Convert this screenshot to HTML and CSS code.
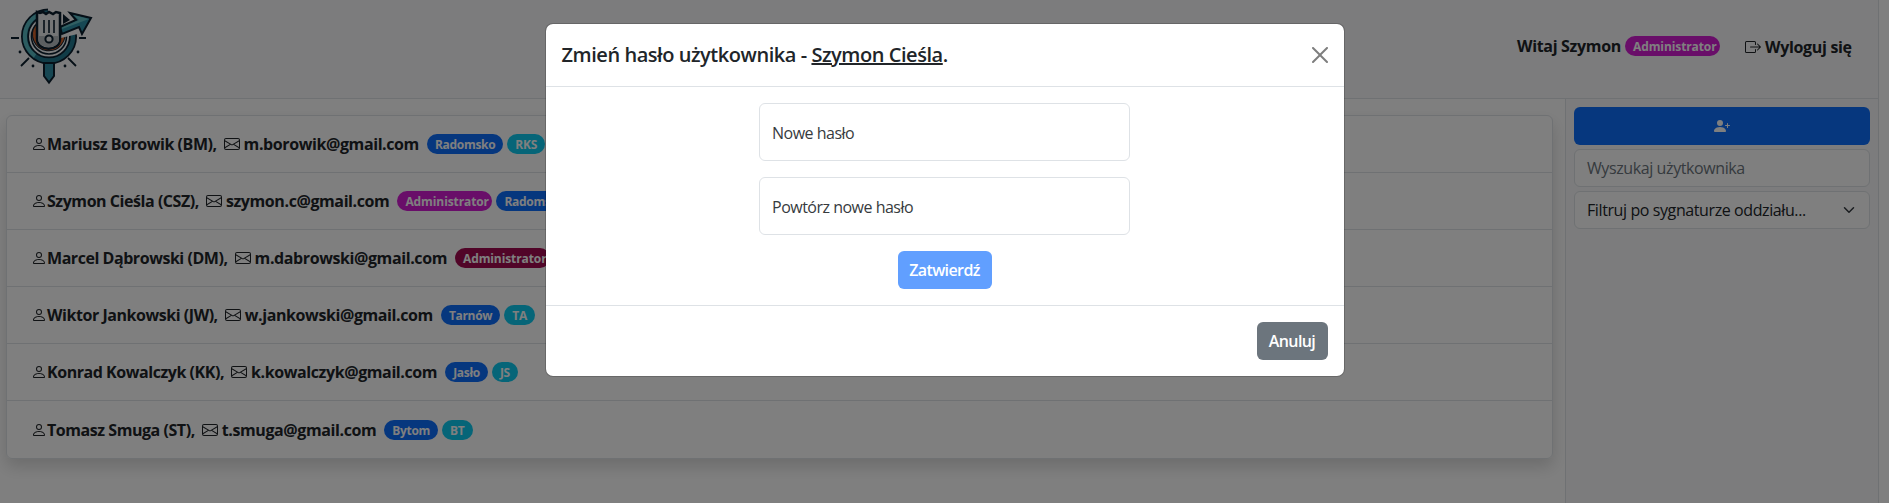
FILE: index.html
```html
<!DOCTYPE html>
<html lang="pl">
<head>
<meta charset="utf-8">
<title>Użytkownicy</title>
<link rel="stylesheet" href="styles.css">
</head>
<body>
<svg width="0" height="0" class="sprite">
  <symbol id="person" viewBox="0 0 16 16"><path d="M8 8a3 3 0 1 0 0-6 3 3 0 0 0 0 6Zm2-3a2 2 0 1 1-4 0 2 2 0 0 1 4 0Zm4 8c0 1-1 1-1 1H3s-1 0-1-1 1-4 6-4 6 3 6 4Zm-1-.004c-.001-.246-.154-.986-.832-1.664C11.516 10.680 10.289 10 8 10c-2.290 0-3.516.68-4.168 1.332-.678.678-.83 1.418-.832 1.664h10Z"/></symbol>
  <symbol id="envelope" viewBox="0 0 16 16"><path d="M0 4a2 2 0 0 1 2-2h12a2 2 0 0 1 2 2v8a2 2 0 0 1-2 2H2a2 2 0 0 1-2-2V4Zm2-1a1 1 0 0 0-1 1v.217l7 4.200 7-4.200V4a1 1 0 0 0-1-1H2Zm13 2.383-4.708 2.825L15 11.105V5.383Zm-.034 6.876-5.640-3.471L8 9.583l-1.326-.795-5.640 3.470A1 1 0 0 0 2 13h12a1 1 0 0 0 .966-.741ZM1 11.105l4.708-2.897L1 5.383v5.722Z"/></symbol>
</svg>
<div class="page">
  <header class="topbar">
    <svg class="logo" viewBox="0 0 90 84" width="90" height="84">
      <g fill="none">
        <circle cx="41" cy="31.500" r="24" stroke="#0b1e2e" stroke-width="8"/>
        <circle cx="41" cy="31.500" r="24" stroke="#23788f" stroke-width="4.500"/>
        <path d="M27 51A24 24 0 0 1 30 10" stroke="#58b9c0" stroke-width="4"/>
        <circle cx="41" cy="31.500" r="17.500" stroke="#0b1e2e" stroke-width="1.600"/>
        <path d="M29 22a14 14 0 1 0 25 3" stroke="#0b1e2e" stroke-width="5.500"/>
        <path d="M29 22a14 14 0 1 0 25 3" stroke="#d4622a" stroke-width="3.500"/>
      </g>
      <path d="M40 0H78V27L53 33V10H40Z" fill="#f8f9fa"/>
      <path d="M55 9l7 6-7 4Z" fill="#0b1e2e"/>
      <path d="M52 22L68 15 62 8 83 13 74 29 71 22 54 29Z" fill="#2f91a8" stroke="#0b1e2e" stroke-width="2"/>
      <path d="M65 10L81 14 54 24V22.500L71 15Z" fill="#63bfc5"/>
      <path d="M29 7l3 1 3-1 3 2 3-2 4 2 3-2 4 1v26c0 13-23 13-23 0Z" fill="#e9ebed" stroke="#0b1e2e" stroke-width="2.500"/>
      <path d="M30.500 31h20.500v5c-2 8-18 8-20.500 0Z" fill="#b9bec3"/>
      <path d="M36 15v13m5-13v13m5-13v13" stroke="#0b1e2e" stroke-width="1.600"/>
      <circle cx="41" cy="34" r="3.600" fill="#e9ebed" stroke="#0b1e2e" stroke-width="2"/>
      <path d="M36 58h10v13l-5 6.500-5-6.500Z" fill="#2f8fa6" stroke="#0b1e2e" stroke-width="2"/>
      <path d="M3 33h8m60 0h7M21 53l-8 8m47-8l8 8" stroke="#0b1e2e" stroke-width="1.800"/>
      <g fill="#0b1e2e"><circle cx="12" cy="47" r="1.400"/><circle cx="70" cy="47" r="1.400"/><circle cx="25" cy="61" r="1.400"/><circle cx="57" cy="61" r="1.400"/></g>
    </svg>
    <div class="account">
      <span class="hello">Witaj Szymon</span>
      <span class="badge magenta admin">Administrator</span>
      <a class="logout"><svg width="16" height="16" viewBox="0 0 16 16" fill="currentColor"><path fill-rule="evenodd" d="M10 12.500a.5.5 0 0 1-.5.5h-8a.5.5 0 0 1-.5-.5v-9a.5.5 0 0 1 .5-.5h8a.5.5 0 0 1 .5.5v2a.5.5 0 0 0 1 0v-2A1.500 1.500 0 0 0 9.500 2h-8A1.500 1.500 0 0 0 0 3.500v9A1.500 1.500 0 0 0 1.500 14h8a1.500 1.500 0 0 0 1.500-1.500v-2a.5.5 0 0 0-1 0v2z"/><path fill-rule="evenodd" d="M15.854 8.354a.5.5 0 0 0 0-.708l-3-3a.5.5 0 0 0-.708.708L14.293 7.500H5.500a.5.5 0 0 0 0 1h8.793l-2.147 2.146a.5.5 0 0 0 .708.708l3-3z"/></svg><span>Wyloguj się</span></a>
    </div>
  </header>
  <div class="content">
    <main class="main">
      <ul class="users">
        <li><svg class="ico"><use href="#person"/></svg><span class="name">Mariusz Borowik (BM),</span><svg class="ico mail"><use href="#envelope"/></svg><span class="email">m.borowik@gmail.com</span><span class="badge blue">Radomsko</span><span class="badge cyan">RKS</span></li>
        <li><svg class="ico"><use href="#person"/></svg><span class="name">Szymon Cieśla (CSZ),</span><svg class="ico mail"><use href="#envelope"/></svg><span class="email">szymon.c@gmail.com</span><span class="badge magenta admin">Administrator</span><span class="badge blue">Radomsko</span></li>
        <li><svg class="ico"><use href="#person"/></svg><span class="name">Marcel Dąbrowski (DM),</span><svg class="ico mail"><use href="#envelope"/></svg><span class="email">m.dabrowski@gmail.com</span><span class="badge crimson admin">Administrator</span></li>
        <li><svg class="ico"><use href="#person"/></svg><span class="name">Wiktor Jankowski (JW),</span><svg class="ico mail"><use href="#envelope"/></svg><span class="email">w.jankowski@gmail.com</span><span class="badge blue">Tarnów</span><span class="badge cyan">TA</span></li>
        <li><svg class="ico"><use href="#person"/></svg><span class="name">Konrad Kowalczyk (KK),</span><svg class="ico mail"><use href="#envelope"/></svg><span class="email">k.kowalczyk@gmail.com</span><span class="badge blue">Jasło</span><span class="badge cyan">JS</span></li>
        <li><svg class="ico"><use href="#person"/></svg><span class="name">Tomasz Smuga (ST),</span><svg class="ico mail"><use href="#envelope"/></svg><span class="email">t.smuga@gmail.com</span><span class="badge blue">Bytom</span><span class="badge cyan">BT</span></li>
      </ul>
    </main>
    <aside class="side">
      <button class="add"><svg width="16" height="16" viewBox="0 0 16 16" fill="currentColor"><path d="M1 14s-1 0-1-1 1-4 6-4 6 3 6 4-1 1-1 1H1zm5-6a3 3 0 1 0 0-6 3 3 0 0 0 0 6z"/><path fill-rule="evenodd" d="M13.500 5a.5.5 0 0 1 .5.5V7h1.500a.5.5 0 0 1 0 1H14v1.500a.5.5 0 0 1-1 0V8h-1.500a.5.5 0 0 1 0-1H13V5.500a.5.5 0 0 1 .5-.5z"/></svg></button>
      <div class="field search"><span>Wyszukaj użytkownika</span></div>
      <div class="field select"><span>Filtruj po sygnaturze oddziału...</span><svg width="16" height="12" viewBox="0 0 16 16"><path fill="none" stroke="#343a40" stroke-linecap="round" stroke-linejoin="round" stroke-width="2" d="m2 5 6 6 6-6"/></svg></div>
    </aside>
  </div>
</div>
<div class="overlay">
  <section class="modal">
    <div class="modal-head">
      <h5>Zmień hasło użytkownika - <u>Szymon Cieśla</u>.</h5>
      <svg class="close" width="16" height="16" viewBox="0 0 16 16"><path d="M.293.293a1 1 0 0 1 1.414 0L8 6.586 14.293.293a1 1 0 1 1 1.414 1.414L9.414 8l6.293 6.293a1 1 0 0 1-1.414 1.414L8 9.414l-6.293 6.293a1 1 0 0 1-1.414-1.414L6.586 8 .293 1.707a1 1 0 0 1 0-1.414z"/></svg>
    </div>
    <div class="modal-body">
      <div class="pass">Nowe hasło</div>
      <div class="pass">Powtórz nowe hasło</div>
      <button class="btn confirm">Zatwierdź</button>
    </div>
    <div class="modal-foot"><button class="btn cancel">Anuluj</button></div>
  </section>
</div>
</body>
</html>
```
FILE: styles.css
```css
* { box-sizing: border-box; }
body { margin: 0; height: 503px; overflow: hidden; font: 16px/24px "Open Sans", "Noto Sans", sans-serif; color: #212529; background: #fff; }
.sprite { position: absolute; }
button { font: inherit; border: 0; padding: 0; }
.page { width: 1879px; height: 503px; border-right: 1px solid #dee2e6; display: flex; flex-direction: column; }
.topbar { height: 99px; flex: none; background: #f8f9fa; border-bottom: 1px solid #dee2e6; display: flex; justify-content: space-between; align-items: flex-start; padding: 5px 25px 0 8px; }
.account { display: flex; align-items: flex-start; margin-top: 29px; font-weight: 700; letter-spacing: -0.320px; }
.hello { margin-right: 4px; width: 104px; white-space: nowrap; }
.account .badge { margin: 2px 25px 0 0; }
.logout { display: flex; align-items: center; gap: 4px; margin-top: 1px; width: 108px; white-space: nowrap; }
.content { flex: 1; display: flex; }
.main { flex: 1; padding: 16px 12px 0 6px; }
.users { margin: 0; padding: 0; list-style: none; border: 1px solid #dee2e6; border-radius: 6px; box-shadow: 0 8px 16px rgba(0,0,0,.15); }
.users li { height: 57px; display: flex; align-items: center; padding-left: 24px; border-bottom: 1px solid #dee2e6; font-weight: 700; white-space: nowrap; }
.users li:last-child { border-bottom: 0; }
.name { letter-spacing: -0.450px; }
.ico { width: 16px; height: 16px; fill: #212529; flex: none; }
.mail { margin: 0 4px 0 7px; }
.email { margin-right: 8px; letter-spacing: -0.400px; }
.badge { height: 20px; padding: 0 8px; margin-right: 4px; border-radius: 10px; color: #fff; font-size: 12px; line-height: 21px; font-weight: 700; letter-spacing: -0.300px; white-space: nowrap; text-align: center; }
.admin { width: 95px; letter-spacing: -0.100px; }
.blue { background: #0d6efd; }
.cyan { background: #0dcaf0; }
.magenta { background: #d31cd3; }
.crimson { background: #a30b50; }
.side { width: 313px; flex: none; background: #f8f9fa; border-left: 1px solid #dee2e6; padding: 8px; display: flex; flex-direction: column; gap: 4px; }
.add { height: 38px; border-radius: 6px; background: #0d6efd; color: #fff; display: flex; align-items: center; justify-content: center; }
.field { height: 38px; border: 1px solid #dee2e6; border-radius: 6px; background: #fff; padding: 0 12px; display: flex; align-items: center; justify-content: space-between; letter-spacing: -0.400px; white-space: nowrap; }
.search { color: #6c757d; }
.overlay { position: absolute; inset: 0; background: rgba(0,0,0,.5); display: flex; justify-content: center; align-items: flex-start; padding-top: 23px; }
.modal { width: 800px; background: #fff; background-clip: padding-box; border: 1px solid rgba(0,0,0,.175); border-radius: 8px; }
.modal-head { height: 63px; padding: 0 16px; display: flex; align-items: center; justify-content: space-between; border-bottom: 1px solid #dee2e6; }
h5 { margin: 0; font-size: 20px; line-height: 30px; font-weight: 600; letter-spacing: -0.450px; white-space: nowrap; }
.close { opacity: .5; }
.modal-body { padding: 16px; display: flex; flex-direction: column; align-items: center; gap: 16px; }
.pass { width: 371px; height: 58px; border: 1px solid #dee2e6; border-radius: 6px; padding: 17px 12px; letter-spacing: -0.500px; color: #373b3e; }
.btn { height: 38px; border-radius: 6px; color: #fff; font-weight: 600; letter-spacing: -0.600px; text-align: center; }
.confirm { width: 94px; background: #619fff; }
.modal-foot { height: 71px; padding: 16px; border-top: 1px solid #dee2e6; display: flex; justify-content: flex-end; }
.cancel { width: 71px; background: #6c757d; }
```
